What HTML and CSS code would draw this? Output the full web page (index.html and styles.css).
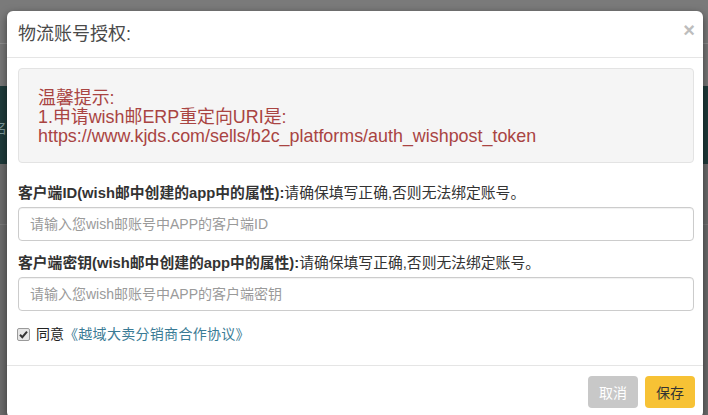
FILE: index.html
```html
<!DOCTYPE html>
<html lang="zh-CN">
<head>
<meta charset="utf-8">
<title>物流账号授权</title>
<link rel="stylesheet" href="styles.css">
</head>
<body>
  <div class="page">
    <div class="page-top"></div>
    <div class="page-gap"></div>
    <div class="page-band"><span class="band-text">名</span></div>
    <div class="page-rest"></div>
  </div>

  <div class="modal">
    <div class="modal-header">
      <h4 class="modal-title">物流账号授权:</h4>
      <button class="close" type="button">×</button>
    </div>
    <div class="modal-body">
      <div class="alert">
        <div class="alert-line">温馨提示:</div>
        <div class="alert-line">1.申请wish邮ERP重定向URI是:</div>
        <div class="alert-line">https://www.kjds.com/sells/b2c_platforms/auth_wishpost_token</div>
      </div>

      <div class="field">
        <label class="field-label"><b>客户端ID(wish邮中创建的app中的属性):</b>请确保填写正确,否则无法绑定账号。</label>
        <input class="input" type="text" placeholder="请输入您wish邮账号中APP的客户端ID">
      </div>

      <div class="field field-second">
        <label class="field-label"><b>客户端密钥(wish邮中创建的app中的属性):</b>请确保填写正确,否则无法绑定账号。</label>
        <input class="input" type="text" placeholder="请输入您wish邮账号中APP的客户端密钥">
      </div>

      <div class="agree">
        <span class="check">
          <svg width="13" height="13" viewBox="0 0 13 13">
            <rect x="0.5" y="0.5" width="12" height="12" rx="1.5" fill="#e6e6e6" stroke="#9a9a9a"/>
            <path d="M3 6.8 L5.3 9.2 L10 3.6" fill="none" stroke="#333" stroke-width="2"/>
          </svg>
        </span>
        <span class="agree-text">同意</span><a class="agree-link" href="#">《越域大卖分销商合作协议》</a>
      </div>
    </div>
    <div class="modal-footer">
      <button class="btn btn-cancel" type="button">取消</button>
      <button class="btn btn-save" type="button">保存</button>
    </div>
  </div>
</body>
</html>
```

FILE: styles.css
```css
html, body {
  margin: 0;
  padding: 0;
  width: 708px;
  height: 415px;
  overflow: hidden;
}

body {
  position: relative;
  background: #6c6c6c;
  font-family: "Liberation Sans", "Noto Sans CJK SC", sans-serif;
  font-size: 14px;
  color: #333;
}

/* page behind the backdrop */
.page {
  display: flex;
  flex-direction: column;
}
.page-top {
  height: 43px;
  background: #7a7a7a;
  border-bottom: 1px solid #8e8e8e;
}
.page-gap {
  height: 42px;
  background: #777;
}
.page-band {
  height: 78px;
  background: #1f3b3b;
  display: flex;
  align-items: center;
}
.band-text {
  margin-left: -7px;
  margin-top: 4px;
  font-size: 14px;
  color: #7f9a9a;
}
.page-rest {
  height: 60px;
  background: #6c6c6c;
  border-bottom: 1px solid #7a7a7a;
}

/* modal overlay */
.modal {
  position: absolute;
  top: 11px;
  left: 7px;
  width: 696px;
  background: #fff;
  border-radius: 6px;
  box-shadow: 0 3px 9px rgba(0, 0, 0, 0.5);
}

.modal-header {
  height: 46px;
  padding: 0 8px 0 11px;
  display: flex;
  align-items: center;
  justify-content: space-between;
  border-bottom: 1px solid #e5e5e5;
}
.modal-title {
  margin: 0;
  font-size: 18px;
  font-weight: normal;
  line-height: 24px;
  color: #4a4a4a;
}
.close {
  align-self: flex-start;
  margin-top: 9px;
  padding: 0;
  border: 0;
  background: none;
  font-family: "Liberation Sans", sans-serif;
  font-size: 20px;
  font-weight: bold;
  line-height: 20px;
  color: #bdbdbd;
}

.modal-body {
  padding: 10px 9px 21px 11px;
}

.alert {
  padding: 20px 19px 16px;
  background: #f5f5f5;
  border: 1px solid #e3e3e3;
  border-radius: 4px;
  color: #a94442;
  font-size: 17.9px;
  line-height: 19px;
}

.field {
  margin-top: 20px;
  display: flex;
  flex-direction: column;
}
.field-second {
  margin-top: 12px;
}
.field-label {
  margin-bottom: 4px;
  font-size: 14.8px;
  line-height: 20px;
  color: #333;
}
.field-label b {
  font-weight: bold;
}
.input {
  box-sizing: border-box;
  height: 34px;
  padding: 0 11px;
  border: 1px solid #ccc;
  border-radius: 4px;
  box-shadow: inset 0 1px 1px rgba(0, 0, 0, 0.06);
  font-family: "Liberation Sans", "Noto Sans CJK SC", sans-serif;
  font-size: 14px;
  color: #555;
  outline: none;
}
.input::placeholder {
  color: #9a9a9a;
}

.agree {
  margin-top: 13px;
  display: flex;
  align-items: center;
  line-height: 20px;
  font-size: 14px;
}
.check {
  display: flex;
  margin-left: -1px;
  margin-right: 6px;
}
.agree-text {
  color: #222;
}
.agree-link {
  color: #3a7b95;
  text-decoration: none;
  letter-spacing: 0.3px;
}

.modal-footer {
  border-top: 1px solid #e5e5e5;
  padding: 10px 8px 10px;
  display: flex;
  justify-content: flex-end;
  gap: 7px;
}
.btn {
  height: 32px;
  padding: 0 11px;
  border: 0;
  border-radius: 4px;
  font-family: "Noto Sans CJK SC", sans-serif;
  font-size: 14px;
  line-height: 32px;
}
.btn-cancel {
  background: #c8c8c8;
  color: #fff;
}
.btn-save {
  background: #f7c235;
  color: #333;
}
```
